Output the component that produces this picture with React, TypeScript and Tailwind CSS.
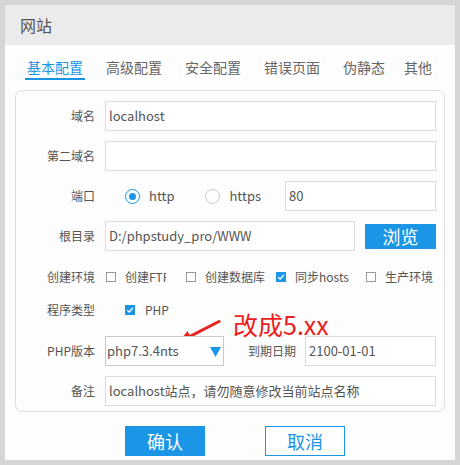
import React from "react";

const F = { fontFamily: '"Noto Sans CJK SC", "Noto Sans", sans-serif' };

function Label({ children }: { children: React.ReactNode }) {
  return (
    <div className="w-[79px] shrink-0 text-right text-[12px] text-[#555] leading-none">{children}</div>
  );
}

function Input({ value, w }: { value?: string; w: string }) {
  return (
    <div className={`${w} h-[30px] border border-[#dcdcdc] bg-white flex items-center pl-[3px] text-[13px] text-[#555]`}>
      {value}
    </div>
  );
}

function Box({ checked }: { checked?: boolean }) {
  return checked ? (
    <div className="w-[10px] h-[10px] bg-[#1b95e6] flex items-center justify-center shrink-0">
      <svg width="8" height="8" viewBox="0 0 8 8"><path d="M1.2 4.2 L3.2 6 L6.8 2" stroke="white" strokeWidth="1.3" fill="none" /></svg>
    </div>
  ) : (
    <div className="w-[10px] h-[10px] border border-[#999] bg-white shrink-0" />
  );
}

export default function App() {
  const tabs = ["基本配置", "高级配置", "安全配置", "错误页面", "伪静态", "其他"];
  return (
    <div className="w-[460px] h-[465px] bg-[#d6d6d6] pt-[5px] pl-[5px]" style={F}>
      <div className="w-[450px] h-[455px] bg-[#fdfdfd] flex flex-col">
        <div className="h-[40px] bg-[#ebebeb] flex items-center pl-[15px] text-[16px] text-[#555]">网站</div>
        <div className="flex pl-[20px] mt-[12px] h-[23px]">
          {tabs.map((t, i) => (
            <div
              key={t}
              className={`px-[2px] text-[14px] leading-[21px] bg-white ${i === 0 ? "text-[#1b95e6] border-b-2 border-[#1b95e6]" : "text-[#666]"} ${i === 0 ? "" : i === 5 ? "ml-[15px]" : "ml-[19px]"}`}
            >
              {t}
            </div>
          ))}
        </div>
        <div className="mx-[10px] mt-[10px] h-[322px] border border-[#dedede] rounded-[7px] pr-[8px] pt-[10px] flex flex-col">
          <div className="flex items-center gap-[10px] h-[30px]">
            <Label>域名</Label>
            <Input value="localhost" w="w-[331px]" />
          </div>
          <div className="flex items-center gap-[10px] h-[30px] mt-[10px]">
            <Label>第二域名</Label>
            <Input w="w-[331px]" />
          </div>
          <div className="flex items-center h-[30px] mt-[10px]">
            <Label>端口</Label>
            <div className="ml-[30px] w-[15px] h-[15px] rounded-full border border-[#1b95e6] flex items-center justify-center">
              <div className="w-[7px] h-[7px] rounded-full bg-[#1b95e6]" />
            </div>
            <span className="ml-[9px] text-[13px] text-[#555]">http</span>
            <div className="ml-[31px] w-[15px] h-[15px] rounded-full border border-[#ccc]" />
            <span className="ml-[9px] text-[13px] text-[#555]">https</span>
            <div className="ml-auto">
              <Input value="80" w="w-[151px]" />
            </div>
          </div>
          <div className="flex items-center gap-[10px] h-[30px] mt-[10px]">
            <Label>根目录</Label>
            <Input value="D:/phpstudy_pro/WWW" w="w-[251px]" />
            <div className="w-[71px] h-[25px] bg-[#1b95e6] text-white text-[18px] flex items-center justify-center">浏览</div>
          </div>
          <div className="flex items-center h-[32px] mt-[10px] text-[12px] text-[#555]">
            <Label>创建环境</Label>
            <div className="ml-[11px]"><Box /></div>
            <span className="ml-[9px] w-[41px] overflow-hidden whitespace-nowrap">创建FTP</span>
            <div className="ml-[20px]"><Box /></div>
            <span className="ml-[9px] whitespace-nowrap">创建数据库</span>
            <div className="ml-[11px]"><Box checked /></div>
            <span className="ml-[9px] whitespace-nowrap">同步hosts</span>
            <div className="ml-[17px]"><Box /></div>
            <span className="ml-[9px] whitespace-nowrap">生产环境</span>
          </div>
          <div className="flex items-center h-[34px] text-[12px] text-[#555] relative">
            <Label>程序类型</Label>
            <div className="ml-[30px]"><Box checked /></div>
            <span className="ml-[10px]">PHP</span>
            <span className="absolute left-[217px] top-[19px] text-[25px] leading-none text-[#ee1c1c] whitespace-nowrap">改成5.xx</span>
            <svg className="absolute left-[160px] top-[27px]" width="46" height="26" viewBox="0 0 46 26">
              <path d="M14 16.4 L43 1.5" stroke="#e8231f" strokeWidth="3" strokeLinecap="round" />
              <path d="M2 23 L17.1 21.7 L11.5 11.1 Z" fill="#e8231f" />
            </svg>
          </div>
          <div className="flex items-center h-[30px] mt-[9px]">
            <Label>PHP版本</Label>
            <div className="ml-[10px] w-[119px] h-[30px] border border-[#c8c8c8] bg-white flex items-center pl-[1px] text-[13px] text-[#555] relative z-0">
              php7.3.4nts
              <svg className="absolute right-[2px] top-[10px]" width="11" height="10" viewBox="0 0 11 10"><path d="M0 0 L11 0 L5.5 10 Z" fill="#1b95e6" /></svg>
            </div>
            <div className="ml-[24px] text-[12px] text-[#555] whitespace-nowrap">到期日期</div>
            <div className="ml-auto">
              <Input value="2100-01-01" w="w-[131px]" />
            </div>
          </div>
          <div className="flex items-center gap-[10px] h-[30px] mt-[10px]">
            <Label>备注</Label>
            <Input value="localhost站点，请勿随意修改当前站点名称" w="w-[331px]" />
          </div>
        </div>
        <div className="flex mt-[14px] pl-[120px]">
          <div className="w-[80px] h-[30px] bg-[#1b95e6] text-white text-[18px] flex items-center justify-center">确认</div>
          <div className="ml-[60px] w-[80px] h-[30px] border border-[#1b95e6] text-[#1b95e6] text-[18px] flex items-center justify-center bg-white">取消</div>
        </div>
      </div>
    </div>
  );
}
